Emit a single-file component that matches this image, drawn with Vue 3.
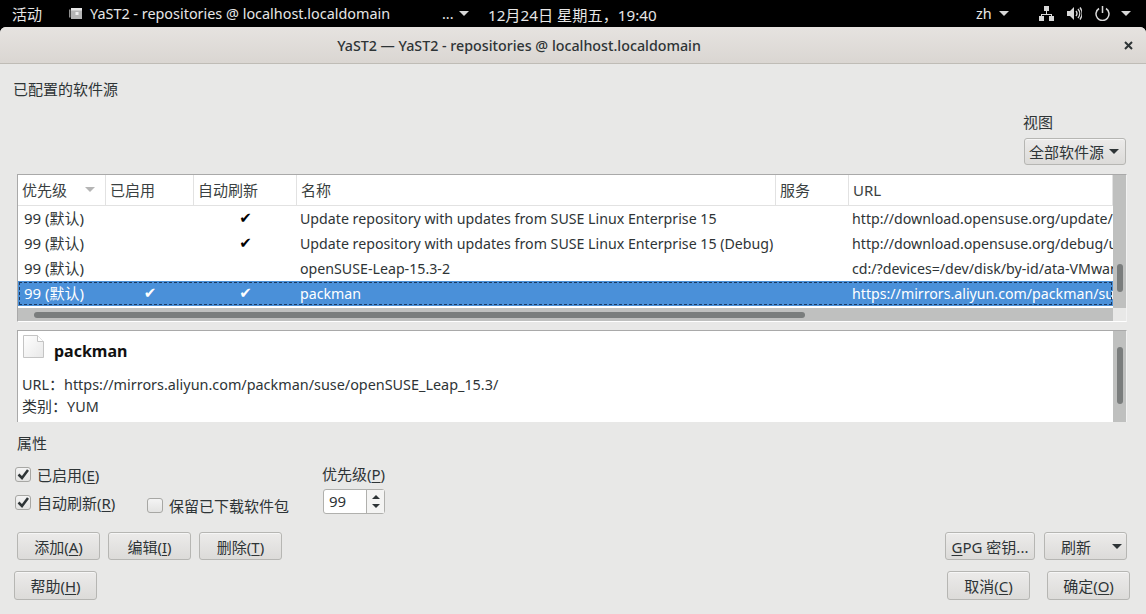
<script setup>
const columns = [
  { label: '优先级', width: 88, sort: true },
  { label: '已启用', width: 88 },
  { label: '自动刷新', width: 103 },
  { label: '名称', width: 479 },
  { label: '服务', width: 73 },
  { label: 'URL', width: 264 }
]

const repos = [
  { enabled: false, refresh: true, name: 'Update repository with updates from SUSE Linux Enterprise 15', url: 'http://download.opensuse.org/update/leap/15.3/sle/' },
  { enabled: false, refresh: true, name: 'Update repository with updates from SUSE Linux Enterprise 15 (Debug)', url: 'http://download.opensuse.org/debug/update/leap/15.3/sle/' },
  { enabled: false, refresh: false, name: 'openSUSE-Leap-15.3-2', url: 'cd:/?devices=/dev/disk/by-id/ata-VMware_Virtual' },
  { enabled: true, refresh: true, name: 'packman', url: 'https://mirrors.aliyun.com/packman/suse/openSUSE_Leap_15.3/', selected: true }
]
</script>

<template>
  <div class="screen">
    <header class="topbar">
      <span class="activities">活动</span>
      <span class="app">
        <svg class="app-icon" width="13" height="11" viewBox="0 0 13 11">
          <path d="M0 1.5h1.5v8H0z" fill="#8f8f8f" />
          <path d="M2 0h11v11H2z" fill="#b5b5b5" />
          <path d="M2 0h11v2.5H2z" fill="#e6e6e6" />
          <path d="M6.5 4h3v3h-3z" fill="#eeeeee" />
        </svg>
        YaST2 - repositories @ localhost.localdomain
      </span>
      <span class="more">...<i class="caret light"></i></span>
      <span class="clock">12月24日 星期五，19:40</span>
      <span class="lang">zh<i class="caret light"></i></span>
      <span class="tray">
        <svg width="15" height="15" viewBox="0 0 15 15" fill="#d8d8d8">
          <path d="M5 0h5v5H5zM7 5h1v3h5v2h-1V9H3v1H2V8h5zM0 10h5v5H0zM10 10h5v5h-5z" />
        </svg>
        <svg width="15" height="15" viewBox="0 0 15 15" fill="none" stroke="#d8d8d8">
          <path d="M0 5h3l4-4v13l-4-4H0z" fill="#d8d8d8" stroke="none" />
          <path d="M9 5a4 4 0 0 1 0 5M11 3a7 7 0 0 1 0 9M13 1.500a10 10 0 0 1 0 12" stroke-width="1.400" />
        </svg>
        <svg width="15" height="15" viewBox="0 0 15 15" fill="none" stroke="#d8d8d8" stroke-width="1.500">
          <path d="M7.500 0v7" />
          <path d="M4 2.500a6.500 6.500 0 1 0 7 0" />
        </svg>
        <i class="caret light"></i>
      </span>
    </header>

    <div class="window">
      <div class="titlebar">
        <span class="title">YaST2 — YaST2 - repositories @ localhost.localdomain</span>
        <svg class="close" width="9" height="9" viewBox="0 0 9 9" stroke="#2e3436" stroke-width="2">
          <path d="M1 1l7 7M8 1l-7 7" />
        </svg>
      </div>

      <main class="content">
        <div class="heading-row">
          <div class="heading zh">已配置的软件源</div>
          <div class="view-box">
            <div class="view-label zh">视图</div>
            <button class="btn view-btn">全部软件源<i class="caret dark"></i></button>
          </div>
        </div>

        <section class="table-frame">
          <div class="table-main">
            <div class="table-clip">
              <div class="thead">
                <div
                  v-for="col in columns"
                  :key="col.label"
                  class="th zh"
                  :style="{ width: col.width + 'px' }"
                >
                  {{ col.label }}
                  <i v-if="col.sort" class="sort-arrow"></i>
                </div>
              </div>
              <div
                v-for="repo in repos"
                :key="repo.name"
                class="tr"
                :class="{ selected: repo.selected }"
              >
                <div class="td prio zh" :style="{ width: columns[0].width + 'px' }">99 (默认)</div>
                <div class="td mark" :style="{ width: columns[1].width + 'px' }">{{ repo.enabled ? '✔' : '' }}</div>
                <div class="td mark" :style="{ width: columns[2].width + 'px' }">{{ repo.refresh ? '✔' : '' }}</div>
                <div class="td" :style="{ width: columns[3].width + 'px' }">{{ repo.name }}</div>
                <div class="td" :style="{ width: columns[4].width + 'px' }"></div>
                <div class="td" :style="{ width: columns[5].width + 'px' }">{{ repo.url }}</div>
              </div>
            </div>
            <div class="hscroll"><div class="hthumb"></div></div>
          </div>
          <div class="vcol">
            <div class="vscroll top-v"><div class="vthumb"></div></div>
            <div class="corner"></div>
          </div>
        </section>

        <section class="detail-frame">
          <div class="detail-main">
            <div class="detail-head">
              <svg width="21" height="23" viewBox="0 0 21 23">
                <defs>
                  <linearGradient id="page" x1="0" y1="0" x2="1" y2="1">
                    <stop offset="0" stop-color="#ffffff" />
                    <stop offset="1" stop-color="#e8e8e8" />
                  </linearGradient>
                </defs>
                <path d="M.5.5h14l6 6v16H.5z" fill="url(#page)" stroke="#c4c4c4" />
                <path d="M14.500.5v6h6" fill="#fff" stroke="#c4c4c4" />
              </svg>
              <strong>packman</strong>
            </div>
            <div class="detail-line">URL<span class="zh">：</span>https://mirrors.aliyun.com/packman/suse/openSUSE_Leap_15.3/</div>
            <div class="detail-line"><span class="zh">类别：</span>YUM</div>
          </div>
          <div class="vscroll detail-v"><div class="vthumb"></div></div>
        </section>

        <div class="props-title zh">属性</div>

        <div class="props">
          <div class="checks zh">
            <label class="check">
              <span class="box">
                <svg width="14" height="13" viewBox="0 0 14 13" fill="none" stroke="#2e3436" stroke-width="2.500"><path d="M2.500 6.500l3.500 3.500 6-8" /></svg>
              </span>
              <span>已启用(<u>E</u>)</span>
            </label>
            <div class="check-row">
              <label class="check refresh-check">
                <span class="box">
                  <svg width="14" height="13" viewBox="0 0 14 13" fill="none" stroke="#2e3436" stroke-width="2.500"><path d="M2.500 6.500l3.500 3.500 6-8" /></svg>
                </span>
                <span>自动刷新(<u>R</u>)</span>
              </label>
              <label class="check keep">
                <span class="box"></span>
                <span>保留已下载软件包</span>
              </label>
            </div>
          </div>
          <div class="priority zh">
            <div class="priority-label">优先级(<u>P</u>)</div>
            <div class="spin">
              <span class="spin-value">99</span>
              <span class="spin-arrows">
                <i class="up"></i>
                <i class="down"></i>
              </span>
            </div>
          </div>
        </div>

        <div class="button-row row-one">
          <div class="group">
            <button class="btn act">添加(<u>A</u>)</button>
            <button class="btn act">编辑(<u>I</u>)</button>
            <button class="btn act">删除(<u>T</u>)</button>
          </div>
          <div class="group tools">
            <button class="btn gpg"><u>G</u>PG 密钥...</button>
            <button class="btn act refresh">刷新<i class="caret dark"></i></button>
          </div>
        </div>

        <div class="button-row row-two">
          <button class="btn act tall">帮助(<u>H</u>)</button>
          <div class="group confirm">
            <button class="btn act tall">取消(<u>C</u>)</button>
            <button class="btn act tall">确定(<u>O</u>)</button>
          </div>
        </div>
      </main>
    </div>
  </div>
</template>

<style>
html,
body {
  margin: 0;
  background: #000;
}
</style>

<style scoped>
.screen {
  width: 1146px;
  height: 614px;
  overflow: hidden;
  display: flex;
  flex-direction: column;
  font-family: "Noto Sans", "Noto Sans CJK SC", sans-serif;
  font-size: 14.25px;
  color: #2e3436;
}

.zh {
  font-size: 15px;
}

u {
  text-underline-offset: 2px;
}

.caret {
  display: inline-block;
  width: 0;
  height: 0;
  border-left: 5px solid transparent;
  border-right: 5px solid transparent;
  border-top: 5px solid #2e3436;
}
.caret.light {
  border-top-color: #d8d8d8;
}

.topbar {
  height: 27px;
  flex: none;
  background: #000;
  color: #e6e6e6;
  display: flex;
  align-items: center;
  white-space: nowrap;
  font-size: 14.4px;
}
.activities {
  margin-left: 12px;
  width: 57px;
  font-size: 15px;
}
.app {
  display: flex;
  align-items: center;
  gap: 8px;
  width: 373px;
}
.more {
  display: flex;
  align-items: center;
  gap: 5px;
  width: 46px;
}
.clock {
  width: 488px;
  font-size: 15.2px;
}
.lang {
  display: flex;
  align-items: center;
  gap: 7px;
  width: 63px;
}
.tray {
  display: flex;
  align-items: center;
  gap: 13px;
}
.tray .caret {
  margin-left: -2px;
}

.window {
  flex: 1;
  background: #e8e8e7;
  border-radius: 6px 6px 0 0;
  display: flex;
  flex-direction: column;
  min-height: 0;
}
.titlebar {
  height: 36px;
  flex: none;
  padding-right: 108px;
  border-bottom: 1px solid #bfbcb6;
  border-radius: 6px 6px 0 0;
  background: linear-gradient(#e6e3e0, #dad6d2);
  display: flex;
  align-items: center;
  justify-content: center;
  position: relative;
}
.title {
  font-weight: 500;
  color: #2e3436;
}
.close {
  position: absolute;
  right: 13px;
  top: 14px;
}

.content {
  flex: 1;
  min-height: 0;
  padding: 0 16px 0 17px;
  display: flex;
  flex-direction: column;
}

.heading-row {
  height: 110px;
  flex: none;
  display: flex;
  justify-content: space-between;
  margin-right: 4px;
}
.heading {
  margin: 15px 0 0 -4px;
  line-height: 20px;
}
.view-box {
  margin-top: 48px;
  width: 102px;
}
.view-label {
  line-height: 20px;
  margin-left: -1px;
}
.view-btn {
  margin-top: 6px;
  height: 27px;
  width: 102px;
  padding: 0 6px 0 4px;
  display: flex;
  align-items: center;
  justify-content: space-between;
}

.btn {
  font: inherit;
  font-size: 15px;
  color: #2e3436;
  border: 1px solid #b6b6b3;
  border-radius: 3px;
  background: linear-gradient(#ecebea, #dcdbd9);
  box-shadow: inset 0 1px #f6f6f6;
  white-space: nowrap;
}

.table-frame {
  height: 146px;
  flex: none;
  width: 1108px;
  border: 1px solid #a9a9a9;
  border-bottom-color: #fff;
  border-right-color: #f2f2f2;
  display: flex;
  background: #fff;
}
.table-main {
  flex: 1;
  min-width: 0;
  display: flex;
  flex-direction: column;
}
.table-clip {
  flex: 1;
  overflow: hidden;
}
.thead {
  display: flex;
  height: 30px;
  border-bottom: 1px solid #e2e2e2;
}
.th {
  flex: none;
  box-sizing: border-box;
  padding: 0 4px;
  line-height: 30px;
  border-right: 1px solid #e2e2e2;
  position: relative;
  color: #3a3f41;
}
.sort-arrow {
  position: absolute;
  right: 10px;
  top: 12px;
  border-left: 5px solid transparent;
  border-right: 5px solid transparent;
  border-top: 5px solid #b5b5b5;
}
.tr {
  display: flex;
  height: 25px;
  line-height: 25px;
  white-space: nowrap;
  font-size: 14.2px;
}
.tr.selected {
  background: #4a90d9;
  color: #fff;
  outline: 1px dashed #1e3a5f;
  outline-offset: -2px;
}
.td {
  flex: none;
  box-sizing: border-box;
  padding-left: 3px;
  overflow: hidden;
}
.td.prio {
  padding-left: 6px;
}
.td.mark {
  text-align: center;
  padding: 0;
  font-family: "DejaVu Sans", sans-serif;
  font-size: 15px;
  color: #000;
}
.tr.selected .td.mark {
  color: #fff;
}

.hscroll {
  height: 13px;
  flex: none;
  background: #bfc0bf;
  display: flex;
  align-items: center;
  padding: 0 308px 0 16px;
}
.hthumb {
  flex: 1;
  height: 6px;
  border-radius: 3px;
  background: #7a7d7d;
}

.vcol {
  width: 13px;
  flex: none;
  display: flex;
  flex-direction: column;
}
.corner {
  flex: 1;
  background: #e8e8e7;
}
.vscroll {
  width: 13px;
  flex: none;
  background: #bfc0bf;
  display: flex;
  justify-content: center;
  box-sizing: border-box;
}
.vthumb {
  width: 6px;
  border-radius: 3px;
  background: #7a7d7d;
}
.top-v {
  height: 133px;
  padding: 89px 0 16px;
}

.detail-frame {
  height: 91px;
  flex: none;
  width: 1108px;
  margin-top: 8px;
  border: 1px solid #a9a9a9;
  border-bottom: 0;
  border-right-color: #f2f2f2;
  display: flex;
  background: #fff;
  font-size: 14.4px;
}
.detail-main {
  flex: 1;
  padding: 5px 0 0 4px;
}
.detail-head {
  display: flex;
  align-items: flex-start;
  gap: 10px;
  height: 38px;
}
.detail-head svg {
  flex: none;
  margin: -1px 0 0 1px;
}
.detail-head strong {
  font-size: 16px;
  font-weight: 700;
  line-height: 30px;
  color: #111;
}
.detail-line {
  line-height: 21.5px;
}
.detail-v {
  padding: 16px 0 18px;
}

.props-title {
  margin-top: 11px;
  line-height: 20px;
}
.props {
  display: flex;
  height: 65px;
  margin-top: 7px;
}
.checks {
  width: 307px;
  margin-left: -2px;
}
.check {
  display: flex;
  align-items: center;
  gap: 6px;
  height: 28px;
  white-space: nowrap;
}
.check-row {
  display: flex;
}
.refresh-check {
  width: 132px;
}
.keep {
  margin-top: 3px;
}
.box {
  width: 14px;
  height: 13px;
  border: 1px solid #a7a7a4;
  border-radius: 3px;
  background: linear-gradient(#f4f4f4, #e3e3e2);
  flex: none;
  display: flex;
}
.priority-label {
  line-height: 20px;
  margin-top: 4px;
}
.spin {
  margin: 5px 0 0 1px;
  width: 60px;
  height: 23px;
  border: 1px solid #b0b0ad;
  border-radius: 3px;
  background: #fff;
  display: flex;
}
.spin-value {
  flex: 1;
  padding-left: 5px;
  line-height: 23px;
}
.spin-arrows {
  width: 17px;
  border-left: 1px solid #b0b0ad;
  background: #f4f4f3;
  display: flex;
  flex-direction: column;
  align-items: center;
  justify-content: space-evenly;
}
.spin-arrows i {
  width: 0;
  height: 0;
  border-left: 4px solid transparent;
  border-right: 4px solid transparent;
}
.spin-arrows .up {
  border-bottom: 4px solid #2e3436;
}
.spin-arrows .down {
  border-top: 4px solid #2e3436;
}

.button-row {
  display: flex;
  justify-content: space-between;
  flex: none;
}
.row-one {
  margin-top: 7px;
  padding-right: 3px;
}
.row-two {
  margin-top: 11px;
  margin-left: -3px;
}
.group {
  display: flex;
  gap: 8px;
}
.group.tools {
  gap: 9px;
}
.group.confirm {
  gap: 17px;
}
.act {
  width: 83px;
  height: 28px;
  padding: 0;
}
.act.tall {
  height: 29px;
}
.gpg {
  width: 90px;
  height: 28px;
  padding: 0;
}
.refresh {
  display: flex;
  align-items: center;
  padding: 0 4px 0 16px;
  justify-content: space-between;
}
</style>
